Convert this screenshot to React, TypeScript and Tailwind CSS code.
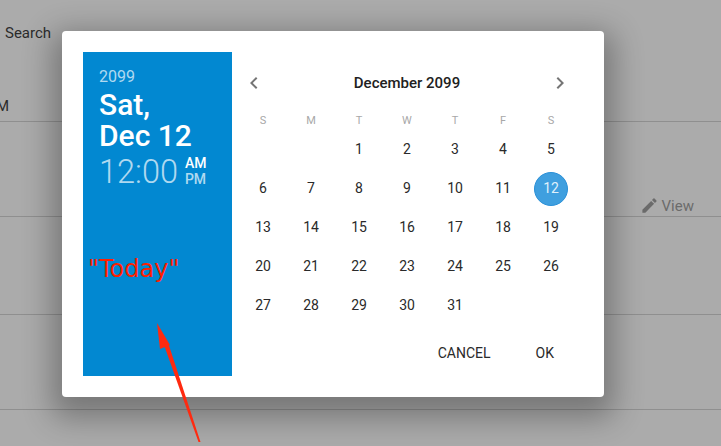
const rows: (number | null)[][] = [
  [null, null, 1, 2, 3, 4, 5],
  [6, 7, 8, 9, 10, 11, 12],
  [13, 14, 15, 16, 17, 18, 19],
  [20, 21, 22, 23, 24, 25, 26],
  [27, 28, 29, 30, 31, null, null],
];
const weekdays = ["S", "M", "T", "W", "T", "F", "S"];

export default function App() {
  return (
    <div className="relative w-[721px] h-[446px] overflow-hidden bg-[#ababab] font-['Roboto',sans-serif]">
      {/* page behind the dialog */}
      <div className="flex flex-col">
        <div className="h-[122px] border-b border-[#8f8f8f] relative">
          <div className="pt-[25px] pl-[5px] text-[15px] leading-4 text-[#2b2b2b]">Search</div>
          <div className="pt-[57px] -ml-[4px] text-[15px] leading-4 text-[#2b2b2b]">M</div>
        </div>
        <div className="h-[95px] border-b border-[#8f8f8f] flex items-end justify-end pr-[27px]">
          <div className="flex items-center gap-[3px] text-[15px] text-[#6b6b6b] -mb-[1px]">
            <svg viewBox="0 0 24 24" className="w-[19px] h-[19px] fill-[#6b6b6b]">
              <path d="M3 17.25V21h3.75L17.81 9.94l-3.75-3.75L3 17.25zM20.71 7.04a1 1 0 0 0 0-1.41l-2.34-2.34a1 1 0 0 0-1.41 0l-1.83 1.83 3.75 3.75 1.83-1.83z" />
            </svg>
            <span>View</span>
          </div>
        </div>
        <div className="h-[98px] border-b border-[#8f8f8f]" />
        <div className="h-[95px] border-b border-[#8f8f8f]" />
      </div>

      {/* dialog */}
      <div className="absolute left-[62px] top-[31px] w-[542px] h-[366px] bg-white rounded-[4px] p-[21px] flex shadow-[0_11px_30px_10px_rgba(0,0,0,0.3)]">
        <div className="w-[149px] h-[324px] bg-[#0288d1] pl-4 pt-[15px] text-white shrink-0">
          <div className="text-[16px] leading-[19px] text-white/70">2099</div>
          <div className="text-[30px] font-medium leading-[31px] mt-[3px]">
            Sat,
            <br />
            Dec 12
          </div>
          <div className="flex items-center">
            <span className="text-[32.5px] font-light leading-[42px] text-white/70">12:00</span>
            <div className="ml-[7px] -mt-[2px] text-[14px] font-medium leading-[16px]">
              <div>AM</div>
              <div className="text-white/70">PM</div>
            </div>
          </div>
        </div>

        <div className="w-[351px] pl-[7px] flex flex-col">
          <div className="w-[336px] h-[20px] flex items-center justify-between px-[6px] mt-[21px]">
            <svg viewBox="0 0 24 24" className="w-[24px] h-[24px] -ml-[3px] fill-[#757575]">
              <path d="M15.41 7.41 14 6l-6 6 6 6 1.41-1.41L10.83 12z" />
            </svg>
            <span className="text-[15px] font-medium text-[#212121]">December 2099</span>
            <svg viewBox="0 0 24 24" className="w-[24px] h-[24px] -mr-[3px] fill-[#757575]">
              <path d="M10 6 8.59 7.41 13.17 12l-4.58 4.59L10 18l6-6z" />
            </svg>
          </div>
          <div className="grid grid-cols-[repeat(7,48px)] mt-[18px] h-[20px] items-center text-center text-[11px] text-[#a8a8a8]">
            {weekdays.map((d, i) => (
              <div key={i}>{d}</div>
            ))}
          </div>
          <div className="-mt-[1px] grid grid-cols-[repeat(7,48px)] auto-rows-[39px] text-[14px] text-[#2a2a2a]">
            {rows.flat().map((d, i) => (
              <div key={i} className="flex items-center justify-center">
                {d === 12 ? (
                  <span className="w-[34px] h-[34px] rounded-full bg-[#3f9fdf] border border-[#2a90d8] text-[#dff0fb] flex items-center justify-center">
                    {d}
                  </span>
                ) : (
                  d
                )}
              </div>
            ))}
          </div>
          <div className="flex justify-end gap-[45px] pr-[29px] mt-[18px] text-[14px] leading-[20px] text-[#2a2a2a]">
            <span>CANCEL</span>
            <span>OK</span>
          </div>
        </div>
      </div>

      {/* annotation */}
      <div className="absolute left-[88px] top-[254px] text-[24px] leading-[30px] text-[#ff2000] font-['DejaVu_Sans',sans-serif]">
        "Today"
      </div>
      <svg className="absolute left-0 top-0" width="721" height="446" viewBox="0 0 721 446">
        <path d="M164 345 L168.5 344 L200.5 442 L198.5 442 Z" fill="#ff2a10" />
        <path d="M157 323 L170 345 L160 349 Z" fill="#ff2a10" />
      </svg>
    </div>
  );
}
